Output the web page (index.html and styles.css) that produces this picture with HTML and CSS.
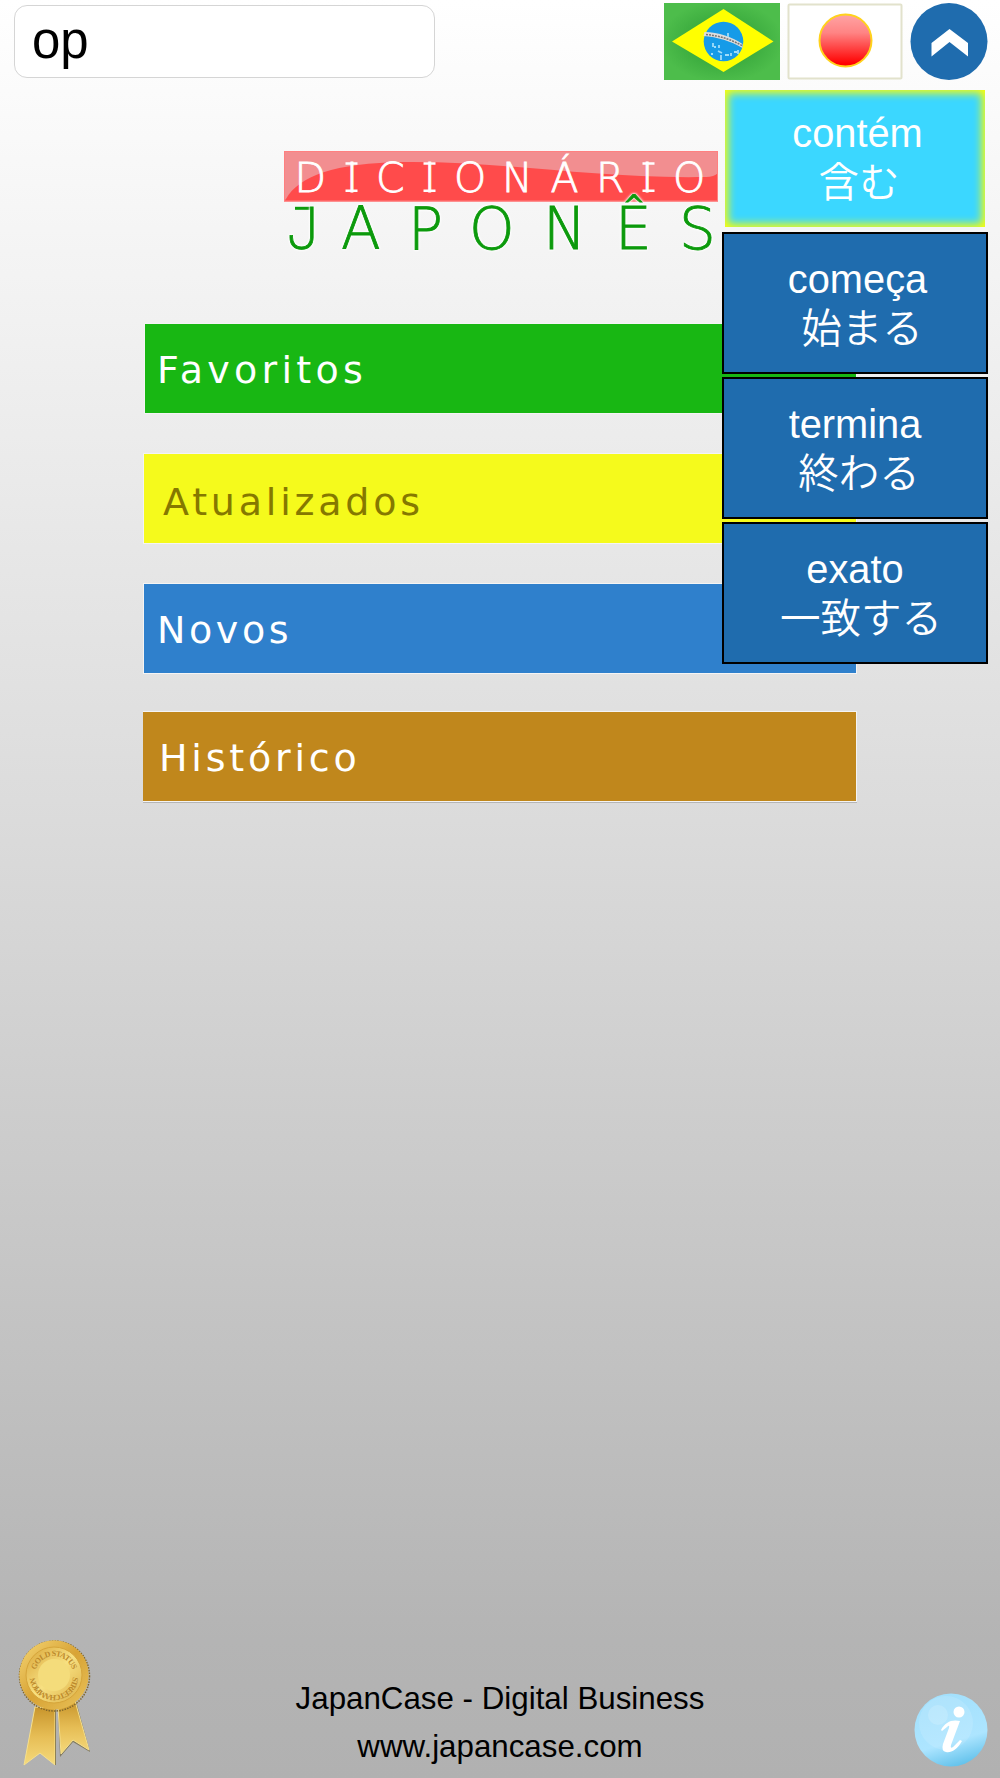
FILE: index.html
```html
<!DOCTYPE html>
<html lang="pt-BR">
<head>
    <meta charset="UTF-8">
    <meta name="viewport" content="width=device-width, initial-scale=1.0">
    <title>Dicionário Japonês</title>
    <link rel="stylesheet" href="styles.css">
</head>
<body>
    <header class="topbar">
        <input type="text" class="search" value="op" aria-label="Buscar">
        <svg class="flag-br" width="116" height="77" viewBox="0 0 116 77">
            <defs>
                <radialGradient id="green" cx=".5" cy=".5" r=".62">
                    <stop offset=".5" stop-color="#3eae40"/>
                    <stop offset=".85" stop-color="#4dbd4b"/>
                </radialGradient>
            </defs>
            <rect width="116" height="77" fill="url(#green)"/>
            <path d="M8 38.500 59.500 6 109.500 38.500 59.500 69Z" fill="#ff0"/>
            <circle cx="59.500" cy="38.500" r="19.800" fill="#169be8"/>
            <path d="M40.500 29c14 0 28 5 38 12v4c-12-7-25-11-39-12z" fill="#ddd"/>
            <path d="M42 31.500c13 1 25 5 36 11" fill="none" stroke="#777" stroke-width="1.500" stroke-dasharray="2 1"/>
            <path d="M64 30v4M49 40v4M50 44h2M55 42v3M54 48l4 2M47 51h2M57 52v5M61 52h4M67 50v3M70 49h3M74 47v4" stroke="#9fdcfa" stroke-width="1.800"/>
        </svg>
        <svg class="flag-jp" width="116" height="77" viewBox="0 0 116 77">
            <defs>
                <linearGradient id="sun" x1="0" y1="0" x2="0" y2="1">
                    <stop offset="0" stop-color="#ffa4a4"/>
                    <stop offset=".35" stop-color="#ff8484"/>
                    <stop offset=".95" stop-color="#f00"/>
                </linearGradient>
            </defs>
            <rect x="1.500" y="1.500" width="113" height="74" rx="1" fill="#fff" stroke="#e2e2cc" stroke-width="2"/>
            <circle cx="58.500" cy="37.500" r="26" fill="url(#sun)" stroke="#ffd21c" stroke-width="2"/>
        </svg>
        <svg class="toggle" width="78" height="77" viewBox="0 0 78 77">
            <circle cx="39" cy="38.500" r="38.500" fill="#1f6cae"/>
            <path d="M21.500 40 39.500 26 58 40v13.500L39.500 39 21.500 53.500Z" fill="#fff"/>
        </svg>
    </header>

    <div class="options">
        <div class="option active"><span class="word">contém</span><span class="jp">含む</span></div>
        <div class="option"><span class="word">começa</span><span class="jp jp-start">始まる</span></div>
        <div class="option"><span>termina</span><span class="jp">終わる</span></div>
        <div class="option"><span>exato</span><span class="jp jp-exact">一致する</span></div>
    </div>

    <main class="content">
        <svg class="logo" width="434" height="104" viewBox="0 0 434 104">
            <rect width="434" height="50.500" fill="#ff4b4b"/>
            <path d="M0 0H434V22Q430 26 422 26C310 28 220 10 120 11C50 12 15 25 2 48L0 50Z" fill="#f28e90"/>
            <rect x=".5" y=".5" width="433" height="49.500" fill="none" stroke="#ff8080"/>
            <text class="logo-top" y="41" x="10.500 62 92 139.800 170 218 266.500 312 357.300 389">DICIONÁRIO</text>
            <path class="serifs" d="M61.500 12.500h12M61.500 39.800h12M139.500 12.500h12M139.500 39.800h12M358.500 12.500h12M358.500 39.800h12"/>
            <path class="hook" d="M11 57.300h15"/>
            <text class="logo-bottom" y="98" x="2 57 124 185 259 331 395"><tspan class="letter-j">J</tspan>APONÊS</text>
        </svg>

        <nav class="menu">
            <a class="menu-item favoritos" href="#">Favoritos</a>
            <a class="menu-item atualizados" href="#">Atualizados</a>
            <a class="menu-item novos" href="#">Novos</a>
            <a class="menu-item historico" href="#">Histórico</a>
        </nav>
    </main>

    <footer class="footer">
        <svg class="medal" width="74" height="130" viewBox="0 0 74 130">
            <defs>
                <linearGradient id="gold" x1="0" y1="0" x2="1" y2="1">
                    <stop offset="0" stop-color="#d9a437"/>
                    <stop offset=".5" stop-color="#f7e081"/>
                    <stop offset="1" stop-color="#dcae45"/>
                </linearGradient>
                <linearGradient id="rim" x1="0" y1="0" x2="1" y2="1">
                    <stop offset="0" stop-color="#f5d674"/>
                    <stop offset=".5" stop-color="#d8a335"/>
                    <stop offset="1" stop-color="#e9c35a"/>
                </linearGradient>
                <linearGradient id="ribbon" x1="0" y1="0" x2="0" y2="1">
                    <stop offset="0" stop-color="#c8952c"/>
                    <stop offset=".5" stop-color="#e6bd55"/>
                    <stop offset="1" stop-color="#f5da7c"/>
                </linearGradient>
                <path id="arcTop" d="M18 36A19 19 0 0 1 56 36"/>
                <path id="arcBottom" d="M56 37A19 19 0 0 1 18 37"/>
            </defs>
            <path d="M41 68 59 62 73 113 56 103 43 118Z" fill="#63562b" opacity=".6"/>
            <path d="M41 68 58 62 72 111 56 101 44 115Z" fill="url(#ribbon)" stroke="#f6e08d"/>
            <path d="M18 68 38 69 38 126 23 114 7 126Z" fill="url(#ribbon)" stroke="#f6e08d"/>
            <path d="M38.500 70V126" stroke="#8d8155"/>
            <circle cx="37.500" cy="37" r="35" fill="none" stroke="#80662b" stroke-width="1.500" stroke-dasharray="1.500 1.200"/>
            <circle cx="37" cy="36" r="34.700" fill="url(#rim)"/>
            <circle cx="37" cy="36" r="28" fill="url(#gold)" stroke="#d6a53a"/>
            <circle cx="37" cy="36" r="16" fill="#f4dc7b"/>
            <text class="medal-text"><textPath href="#arcTop" startOffset="5" textLength="49">GOLD STATUS</textPath></text>
            <text class="medal-text"><textPath href="#arcBottom" startOffset="1" textLength="57">STREET CHAMPION</textPath></text>
        </svg>
        <div class="credits">
            <div>JapanCase - Digital Business</div>
            <div>www.japancase.com</div>
        </div>
        <svg class="info" width="74" height="74" viewBox="0 0 74 74">
            <defs>
                <linearGradient id="blue" x1=".35" y1="0" x2=".65" y2="1">
                    <stop offset="0" stop-color="#a3e0fc"/>
                    <stop offset=".65" stop-color="#ade5ff"/>
                    <stop offset="1" stop-color="#5fc0ea"/>
                </linearGradient>
            </defs>
            <circle cx="37" cy="37" r="36.500" fill="url(#blue)"/>
            <circle cx="32" cy="30" r="27" fill="#fff" opacity=".12"/>
            <circle cx="24" cy="22" r="10" fill="#fff" opacity=".16"/>
            <circle cx="45" cy="19" r="5.500" fill="#fff"/>
            <path d="M27 37C31 29 38 26 46 28L37 52Q36 56 39 54L46 47 48 48C43 57 37 60 32 59Q27 58 29 51L35 35Q36 31 33 34L28 38Z" fill="#fff"/>
        </svg>
    </footer>
</body>
</html>
```
FILE: styles.css
```css
* {
    box-sizing: border-box;
}
body {
    position: relative;
    display: flex;
    flex-direction: column;
    height: 1778px;
    margin: 0;
    font-family: "Liberation Sans", Arial, sans-serif;
    background: linear-gradient(#fff 0, #dcdcdc 800px, #b4b4b4 1640px, #b1b1b1 1778px);
    color: #000;
}
.topbar {
    display: flex;
    align-items: flex-start;
    height: 83px;
    padding: 3px 12px 0 14px;
}
.search {
    width: 421px;
    height: 73px;
    margin: 2px auto 0 0;
    padding: 0 17px 3px;
    border: 1px solid #d5d5d5;
    border-radius: 13px;
    background: #fff;
    font-family: "Liberation Sans", Arial, sans-serif;
    font-size: 51px;
    color: #000;
}
.flag-jp {
    margin: 0 7px;
}
.options {
    position: absolute;
    top: 87px;
    right: 12px;
    width: 266px;
    display: flex;
    flex-direction: column;
    gap: 3px;
}
.option {
    display: flex;
    flex-direction: column;
    align-items: center;
    height: 142px;
    padding-top: 21px;
    border: 2px solid #000;
    background: #1f6cae;
    color: #fff;
    font-size: 39.8px;
    line-height: 48px;
}
.option.active {
    height: 137px;
    margin: 3px 3px 2px;
    padding-top: 19px;
    border: none;
    background: #3bd7ff;
    box-shadow: inset 0 0 9px 3px #ff0;
}
.word {
    padding-left: 5px;
}
.jp {
    padding-left: 8px;
    font-family: "Noto Sans CJK JP", sans-serif;
    font-weight: 350;
    font-size: 40.5px;
    line-height: 46px;
}
.jp-start {
    padding-left: 14px;
}
.jp-exact {
    padding-left: 12px;
}
.content {
    flex: 1;
    display: flex;
    flex-direction: column;
    padding: 68px 143px 0;
}
.logo {
    margin-left: 141px;
    overflow: visible;
}
.logo-top {
    font-family: "DejaVu Sans", Verdana, sans-serif;
    font-weight: 200;
    font-size: 41px;
    fill: #fff;
    stroke: #fff;
    stroke-width: .8;
}
.serifs {
    stroke: #fff;
    stroke-width: 2.5;
}
.logo-bottom {
    font-family: "DejaVu Sans", Verdana, sans-serif;
    font-weight: 200;
    font-size: 58px;
    fill: #0c9a0c;
    stroke: #0c9a0c;
    stroke-width: .8;
    filter: drop-shadow(0 0 1px #fff) drop-shadow(0 0 1px #fff);
}
.letter-j {
    font-family: Inter, sans-serif;
    font-weight: 200;
}
.hook {
    stroke: #0c9a0c;
    stroke-width: 3;
}
.menu {
    display: flex;
    flex-direction: column;
    gap: 39px;
    margin-top: 68px;
}
.menu-item {
    height: 91px;
    padding-left: 13px;
    border: 1px solid #f4f4f4;
    font-family: "DejaVu Sans", Verdana, sans-serif;
    font-size: 38px;
    line-height: 91px;
    letter-spacing: 3.6px;
    color: #fff;
    text-decoration: none;
}
.favoritos {
    margin-left: 1px;
    padding-left: 12px;
    background: #18b713;
    letter-spacing: 4.3px;
    line-height: 93px;
}
.atualizados {
    padding-left: 19px;
    background: #f5fa1c;
    color: #857800;
    letter-spacing: 3.8px;
    line-height: 97px;
}
.novos {
    background: #2f80cc;
    line-height: 93px;
}
.historico {
    margin-top: -2px;
    padding-left: 16px;
    border-left: none;
    background: #c0871c;
    letter-spacing: 3.8px;
    line-height: 92px;
    box-shadow: 0 1px 0 #b5b5b5;
}
.footer {
    display: flex;
    align-items: flex-end;
    justify-content: space-between;
    height: 150px;
    padding: 0 12px 11px 17px;
}
.medal {
    margin-bottom: -2px;
}
.credits {
    margin: 0 5px -4px 0;
    font-size: 31.3px;
    line-height: 48px;
    text-align: center;
}
.medal-text {
    font-family: "Liberation Serif", serif;
    font-weight: bold;
    font-size: 8px;
    fill: #bc892b;
}
```
